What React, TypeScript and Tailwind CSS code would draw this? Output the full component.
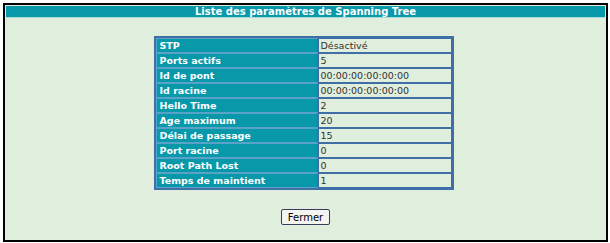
const rows: [string, string][] = [
  ['STP', 'Désactivé'],
  ['Ports actifs', '5'],
  ['Id de pont', '00:00:00:00:00:00'],
  ['Id racine', '00:00:00:00:00:00'],
  ['Hello Time', '2'],
  ['Age maximum', '20'],
  ['Délai de passage', '15'],
  ['Port racine', '0'],
  ['Root Path Lost', '0'],
  ['Temps de maintient', '1'],
];

export default function App() {
  return (
    <div className="w-[610px] h-[243px] bg-white pl-[3px] pt-[3px]" style={{ fontFamily: '"DejaVu Sans", Verdana, sans-serif' }}>
      <div className="w-[605px] h-[239px] border-[2px] border-black bg-[#dfeedd] flex flex-col">
        <div className="mt-[1px] mx-[1px] h-[12px] bg-[#0798aa] border-b border-[#a8dcd8] text-white font-bold text-[10px] leading-[12px] text-center">
          Liste des paramètres de Spanning Tree
        </div>
        <div className="flex justify-center mt-[18px] pr-[4px]">
          <table className="border-[2px] border-[#3f6fa6] border-separate border-spacing-0 w-[300px] text-[9.5px] leading-[12px]">
            <tbody>
              {rows.map(([k, v]) => (
                <tr key={k}>
                  <td className="w-[162px] h-[15px] bg-[#0798aa] text-white font-bold px-[3px] py-0 border border-[#5aa2c8] border-r-[#3f6fa6]">
                    {k}
                  </td>
                  <td className="h-[15px] bg-[#dfeedd] text-[#333] px-[2px] py-0 border border-[#3f6fa6]">
                    {v}
                  </td>
                </tr>
              ))}
            </tbody>
          </table>
        </div>
        <div className="flex justify-center mt-[19px]">
          <button className="h-[16px] px-[6px] bg-[#f4f4f0] border border-[#3a3a5a] rounded-[2px] text-[10px] leading-[13px] text-black">
            Fermer
          </button>
        </div>
      </div>
    </div>
  );
}
